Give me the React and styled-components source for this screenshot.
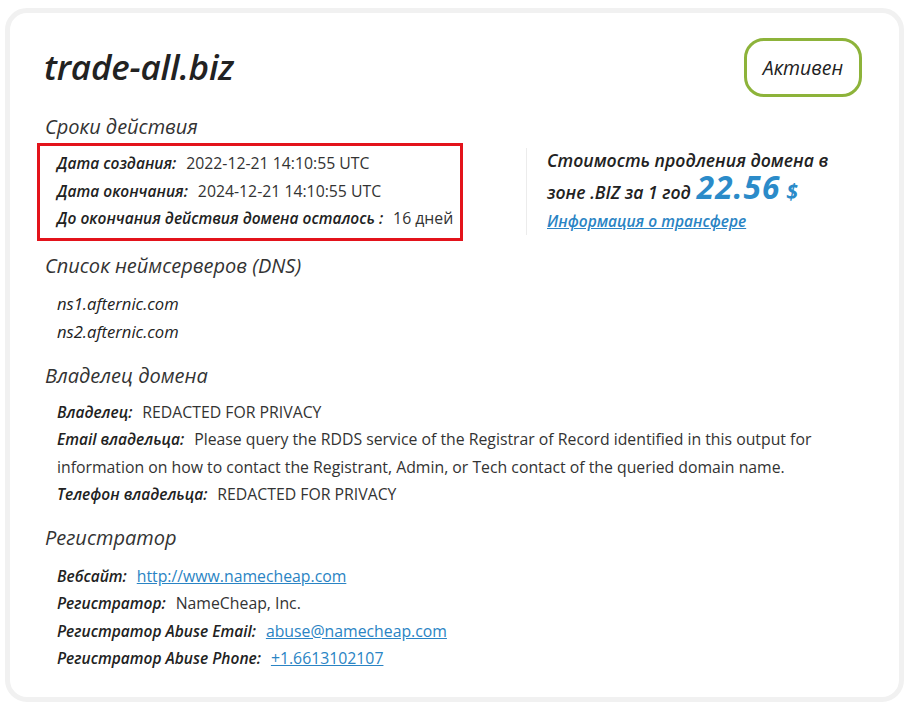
import React from "react";
import styled, { createGlobalStyle } from "styled-components";

const Global = createGlobalStyle`
  html, body { margin: 0; padding: 0; background: #ffffff; }
  body { font-family: "Open Sans", "Noto Sans", sans-serif; color: #222; }
  * { box-sizing: border-box; }
`;

const Card = styled.div`
  margin: 8px 6px 0 5px;
  width: 899px;
  height: 694px;
  border: 5px solid #f1f1f1;
  border-radius: 22px;
  background: #fff;
  padding: 25px 37px 0 34px;
`;

const Header = styled.div`
  display: flex;
  justify-content: space-between;
  align-items: flex-start;
`;

const Title = styled.h1`
  margin: 9px 0 0 0;
  font-family: "Open Sans", sans-serif;
  font-style: italic;
  font-weight: 600;
  font-size: 35px;
  line-height: 40px;
  color: #222;
  letter-spacing: -0.2px;
`;

const Badge = styled.div`
  width: 118px;
  height: 59px;
  border: 3px solid #8db33a;
  border-radius: 20px;
  display: flex;
  align-items: center;
  justify-content: center;
  font-style: italic;
  font-weight: 500;
  font-size: 19.5px;
  color: #222;
`;

const Heading = styled.h2`
  margin: ${(p) => p.$top ?? 15}px 0 0 1px;
  font-style: italic;
  font-weight: 500;
  font-size: 20px;
  line-height: 30px;
  color: #333;
`;

const Rows = styled.div`
  margin-top: ${(p) => p.$top ?? 8}px;
  padding-left: 13px;
`;

const Row = styled.div`
  font-size: 15.8px;
  line-height: 27.5px;
  color: #333;
`;

const Label = styled.span`
  font-style: italic;
  font-weight: 600;
  font-size: 15.5px;
  color: #222;
  margin-right: 10px;
`;

const NsItem = styled.div`
  font-style: italic;
  font-weight: 500;
  font-size: 16.6px;
  line-height: 28px;
  color: #222;
`;

const Link = styled.a`
  color: #2a84c4;
  text-decoration: underline;
`;

const DatesRow = styled.div`
  display: flex;
  align-items: center;
  margin-top: 1px;
`;

const RedBox = styled.div`
  width: 426px;
  margin-left: -7px;
  border: 3px solid #e3131b;
  padding: 4px 0 5px 17px;
  white-space: nowrap;
`;

const PriceBlock = styled.div`
  margin-left: 63px;
  border-left: 1px solid #ececec;
  padding: 0 0 0 20px;
  height: 87px;
  font-style: italic;
  font-weight: 600;
  font-size: 17.6px;
  color: #222;
`;

const PriceLine = styled.div`
  line-height: 24px;
  white-space: nowrap;
  margin-top: ${(p) => p.$top || 0}px;
`;

const Price = styled.span`
  font-size: 31.5px;
  line-height: 24px;
  font-weight: 700;
  color: #2b8bc9;
  margin-left: 6px;
  letter-spacing: 1px;
`;

const Dollar = styled.span`
  font-size: 21px;
  line-height: 24px;
  font-weight: 700;
  color: #2b8bc9;
  margin-left: 6px;
`;

const TransferLink = styled.a`
  display: block;
  margin-top: 7px;
  font-size: 15.5px;
  line-height: 20px;
  color: #2a84c4;
  text-decoration: underline;
`;

export default function App() {
  return (
    <>
      <Global />
      <Card>
        <Header>
          <Title>trade-all.biz</Title>
          <Badge>Активен</Badge>
        </Header>

        <Heading $top={15}>Сроки действия</Heading>
        <DatesRow>
          <RedBox>
            <Row><Label>Дата создания:</Label>2022-12-21 14:10:55 UTC</Row>
            <Row><Label>Дата окончания:</Label>2024-12-21 14:10:55 UTC</Row>
            <Row><Label>До окончания действия домена осталось :</Label>16 дней</Row>
          </RedBox>
          <PriceBlock>
            <PriceLine>Стоимость продления домена в</PriceLine>
            <PriceLine $top={3}>
              зоне .BIZ за 1 год<Price>22.56</Price><Dollar>$</Dollar>
            </PriceLine>
            <TransferLink href="#">Информация о трансфере</TransferLink>
          </PriceBlock>
        </DatesRow>

        <Heading $top={10}>Список неймсерверов (DNS)</Heading>
        <Rows $top={9}>
          <NsItem>ns1.afternic.com</NsItem>
          <NsItem>ns2.afternic.com</NsItem>
        </Rows>

        <Heading $top={15}>Владелец домена</Heading>
        <Rows $top={8}>
          <Row><Label>Владелец:</Label>REDACTED FOR PRIVACY</Row>
          <Row>
            <Label>Email владельца:</Label>Please query the RDDS service of the Registrar of Record identified in this output for information on how to contact the Registrant, Admin, or Tech contact of the queried domain name.
          </Row>
          <Row><Label>Телефон владельца:</Label>REDACTED FOR PRIVACY</Row>
        </Rows>

        <Heading $top={14}>Регистратор</Heading>
        <Rows $top={10}>
          <Row><Label>Вебсайт:</Label><Link href="#">http://www.namecheap.com</Link></Row>
          <Row><Label>Регистратор:</Label>NameCheap, Inc.</Row>
          <Row><Label>Регистратор Abuse Email:</Label><Link href="#">abuse@namecheap.com</Link></Row>
          <Row><Label>Регистратор Abuse Phone:</Label><Link href="#">+1.6613102107</Link></Row>
        </Rows>
      </Card>
    </>
  );
}
